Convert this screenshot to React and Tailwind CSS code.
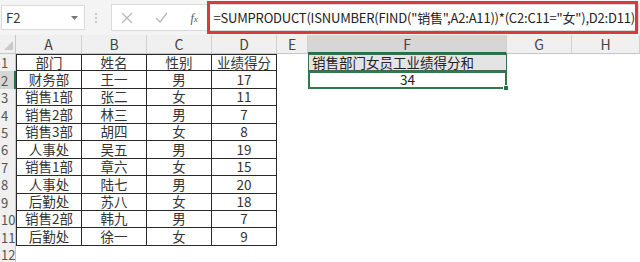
import React from 'react';

const cols = [
  { key: 'A', w: 'w-[66px]' },
  { key: 'B', w: 'w-[65px]' },
  { key: 'C', w: 'w-[65px]' },
  { key: 'D', w: 'w-[65px]' },
  { key: 'E', w: 'w-[31px]' },
  { key: 'F', w: 'w-[199px]' },
  { key: 'G', w: 'w-[65px]' },
  { key: 'H', w: 'w-[68px]' },
];

const rows = [
  ['部门', '姓名', '性别', '业绩得分'],
  ['财务部', '王一', '男', '17'],
  ['销售1部', '张二', '女', '11'],
  ['销售2部', '林三', '男', '7'],
  ['销售3部', '胡四', '女', '8'],
  ['人事处', '吴五', '男', '19'],
  ['销售1部', '章六', '女', '15'],
  ['人事处', '陆七', '男', '20'],
  ['后勤处', '苏八', '女', '18'],
  ['销售2部', '韩九', '男', '7'],
  ['后勤处', '徐一', '女', '9'],
];

const font = { fontFamily: '"Noto Sans CJK SC", "Liberation Sans", sans-serif' };

const Toolbar = () => (
  <div className="flex items-center h-[35px] bg-[#f4f4f4] pl-[1px]">
    <div className="flex items-center justify-between w-[88px] h-[25px] bg-white border border-[#dadada] pl-[4px] pr-[6px] text-[13px] text-[#333]">
      <span>F2</span>
      <svg width="7" height="4" viewBox="0 0 7 4"><path d="M0 0h7L3.5 4z" fill="#777" /></svg>
    </div>
    <div className="flex flex-col gap-[2px] ml-[10px] mr-[14px]">
      <span className="w-[2px] h-[2px] bg-[#c8c8c8]" />
      <span className="w-[2px] h-[2px] bg-[#c8c8c8]" />
      <span className="w-[2px] h-[2px] bg-[#c8c8c8]" />
    </div>
    <div className="flex items-center h-[27px] flex-1 bg-white border border-[#dadada] mr-[1px]">
      <div className="flex items-center w-[95px] pl-[9px] gap-[22px] shrink-0">
        <svg width="12" height="12" viewBox="0 0 12 12"><path d="M1 1l10 10M11 1L1 11" stroke="#b8b8b8" strokeWidth="1.3" /></svg>
        <svg width="13" height="11" viewBox="0 0 13 11"><path d="M1 6l4 4 7-9" stroke="#b8b8b8" strokeWidth="1.3" fill="none" /></svg>
        <span className="italic text-[12px] text-[#555]" style={{ fontFamily: '"Liberation Serif", serif' }}>f<span className="text-[9px]">x</span></span>
      </div>
      <div className="flex items-center flex-1 h-[33px] -mt-[1px] border-[3px] border-[#d93a3c] pl-[3px] text-[13px] leading-none text-[#222] whitespace-nowrap overflow-hidden tracking-[-0.2px]">
        =SUMPRODUCT(ISNUMBER(FIND("销售",A2:A11))*(C2:C11="女"),D2:D11)
      </div>
    </div>
  </div>
);

const HeaderRow = () => (
  <div className="flex h-[19px] bg-[#f0f0f0] text-[14px] leading-none text-[#444]">
    <div className="w-[16px] relative border-r border-b border-[#c6c6c6]">
      <svg className="absolute right-[2px] bottom-[3px]" width="9" height="9" viewBox="0 0 9 9"><path d="M9 0v9H0z" fill="#c9c9c9" /></svg>
    </div>
    {cols.map((c) => (
      <div
        key={c.key}
        className={`${c.w} flex items-center justify-center border-r border-[#d0d0d0] ${c.key === 'F' ? 'bg-[#d6d6d6] border-b-2 border-b-[#217346]' : 'border-b border-b-[#c6c6c6]'}`}
      >
        {c.key}
      </div>
    ))}
  </div>
);

const App = () => {
  const body = Array.from({ length: 12 }, (_, i) => i);
  return (
    <div className="w-[640px] h-[262px] overflow-hidden bg-white" style={font}>
      <Toolbar />
      <HeaderRow />
      {body.map((i) => {
        const r = rows[i];
        const n = i + 1;
        return (
          <div key={n} className="flex h-[17.45px] text-[13.5px] leading-none text-[#333]">
            <div className={`w-[16px] flex items-center pl-[1px] text-[13px] text-[#555] border-r border-[#c6c6c6] ${n === 2 ? 'bg-[#d6d6d6] border-r-2 border-r-[#217346]' : 'bg-[#f0f0f0]'}`}>
              {n}
            </div>
            {cols.map((c, ci) => {
              let cls = `${c.w} flex items-center justify-center`;
              let content = null;
              if (r && ci < 4) {
                cls += ' border-b border-r border-[#2a2a2a]';
                if (ci === 0) cls += ' border-l';
                if (n === 1) cls += ' border-t';
                content = r[ci];
              }
              if (c.key === 'F' && n === 1) {
                cls = `${c.w} flex items-center justify-start pl-[3px] bg-[#e4e4e4] border border-[#3f6b50] text-[#222]`;
                content = '销售部门女员工业绩得分和';
              }
              if (c.key === 'F' && n === 2) {
                cls = `${c.w} relative flex items-center justify-center border-2 border-[#2f7a4b] text-[#222]`;
                content = (
                  <>
                    34
                    <span className="absolute -right-[4px] -bottom-[4px] w-[6px] h-[6px] bg-[#217346] border border-white" />
                  </>
                );
              }
              return (
                <div key={c.key} className={cls}>
                  {content}
                </div>
              );
            })}
          </div>
        );
      })}
    </div>
  );
};

export default App;
